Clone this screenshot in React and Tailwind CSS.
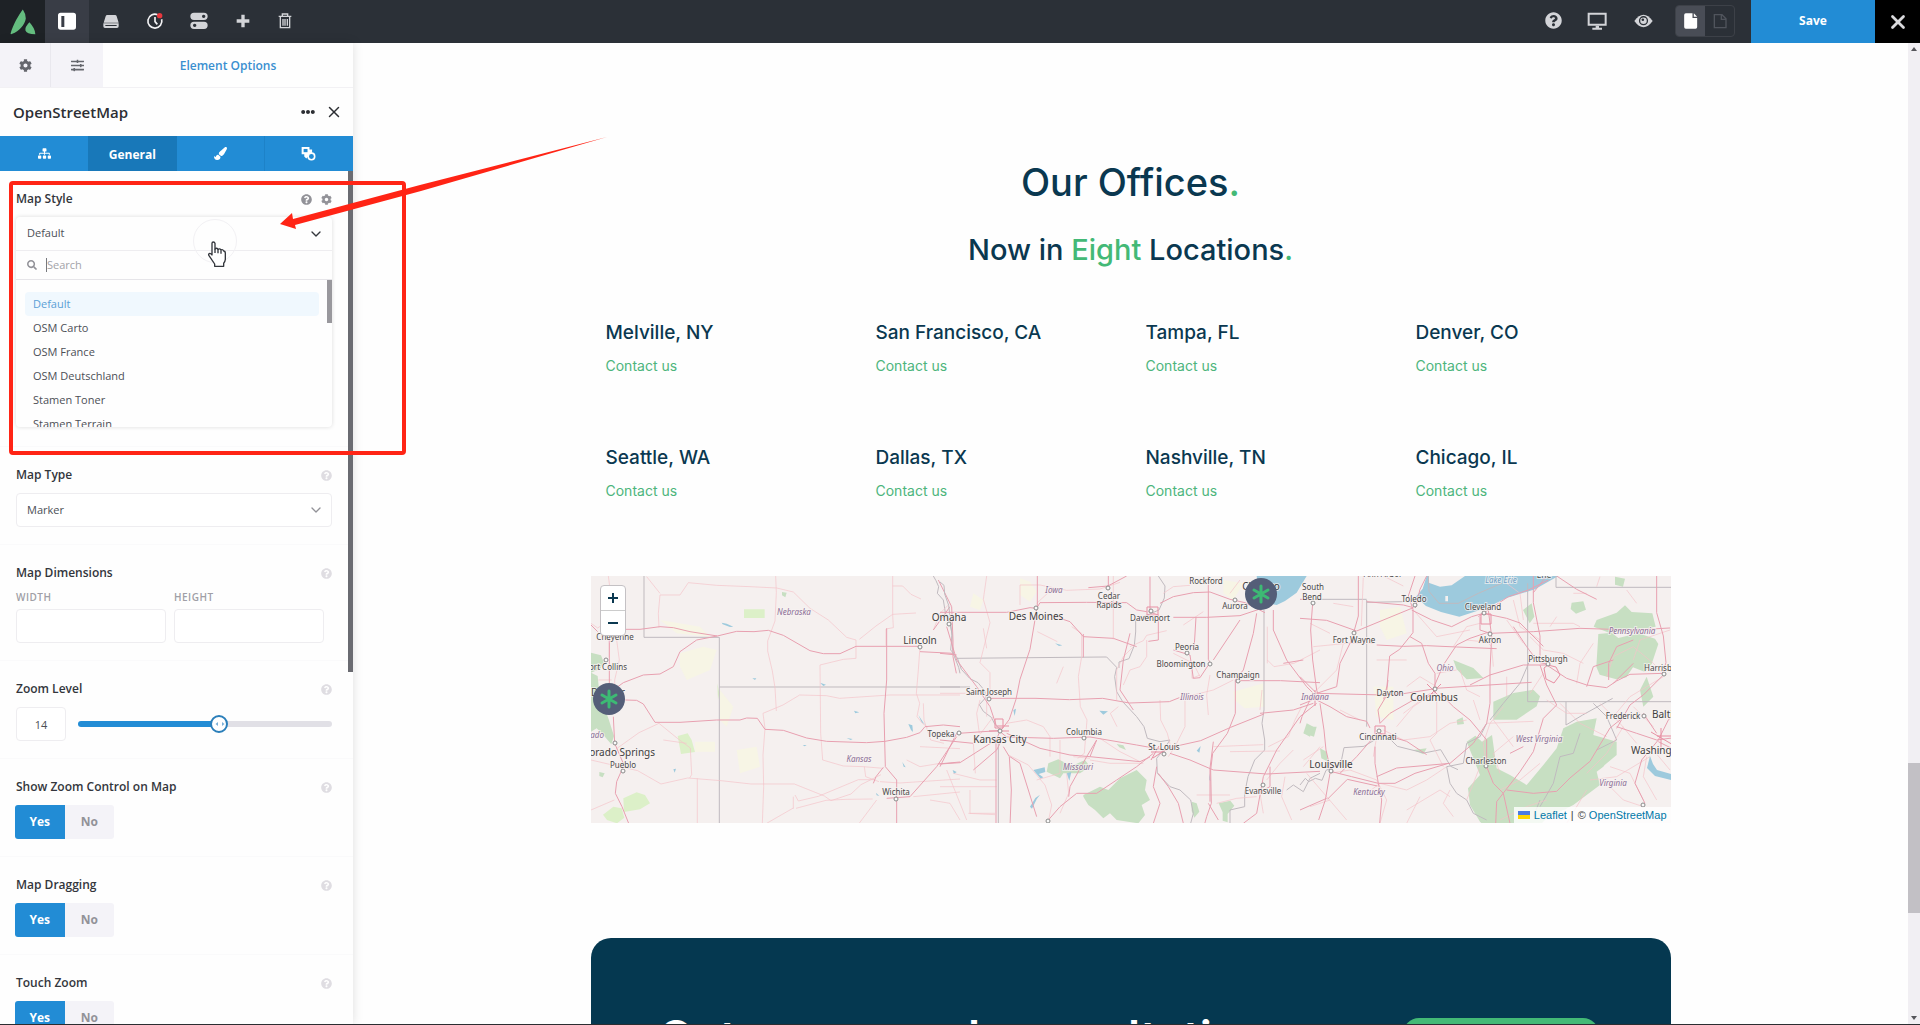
import { FaQuestionCircle, FaCog, FaSlidersH, FaPaintBrush, FaSitemap, FaSearch, FaEllipsisH } from "react-icons/fa";
import { X, ChevronDown } from "lucide-react";

const YES_NO = ["Show Zoom Control on Map", "Map Dragging", "Touch Zoom"];
const STYLES = ["Default", "OSM Carto", "OSM France", "OSM Deutschland", "Stamen Toner", "Stamen Terrain"];
const OFFICES = ["Melville, NY", "San Francisco, CA", "Tampa, FL", "Denver, CO", "Seattle, WA", "Dallas, TX", "Nashville, TN", "Chicago, IL"];

/* ---------- header ---------- */

function Icon({ box, className, children }) {
  return (
    <svg viewBox={box} className={className} fill="currentColor" aria-hidden="true">
      {children}
    </svg>
  );
}

function BarButton({ label, active, width = "w-11", children }) {
  return (
    <button
      type="button"
      aria-label={label}
      className={"flex items-center justify-center pb-0.5 text-[#d3d4d8] " + width + (active ? " bg-[#393d46]" : "")}
    >
      {children}
    </button>
  );
}

function TopBar() {
  return (
    <header className="flex h-[43px] shrink-0 bg-[#2b3037]">
      <a href="#home" aria-label="Avada" className="flex w-[45px] items-center justify-center bg-[#1e2226]">
        <Icon box="28 24 79 78" className="size-[26px] text-[#64bd7f]">
          <path d="M67 25C56 38 36 74 30 97Q29 102 35 99C56 90 73 72 76 52Q76 38 67 25Z" />
          <path d="M87 64Q73 78 75 89Q78 100 105 100Q104 82 87 64Z" />
        </Icon>
      </a>
      <BarButton label="Toggle sidebar" active>
        <Icon box="174 35 54 54" className="size-[18px] text-white">
          <path fillRule="evenodd" d="M182 37h38q8 0 8 8v35q0 8-8 8h-38q-8 0-8-8V45q0-8 8-8zM184 47v33h9V47z" />
        </Icon>
      </BarButton>
      <BarButton label="Library">
        <Icon box="310 40 48 48" className="size-4">
          <path d="M323 46h23q4 0 5 4l6 19H312l6-19q1-4 5-4z" />
          <path fillRule="evenodd" d="M311 71h46v9q0 5-5 5h-36q-5 0-5-5zM317 76v3h34v-3z" />
        </Icon>
      </BarButton>
      <BarButton label="History">
        <Icon box="440 35 54 54" className="size-[18px]">
          <path d="M475 43A21 21 0 1 0 487 57" fill="none" stroke="#f2f2f4" strokeWidth="5" />
          <path d="M467 50v14l7 8" fill="none" stroke="#f2f2f4" strokeWidth="5" />
          <circle cx="481" cy="46" r="8" fill="#e8383f" />
        </Icon>
      </BarButton>
      <BarButton label="Preferences">
        <Icon box="575 36 54 54" className="size-[18px]">
          <path fillRule="evenodd" d="M587 38h30a10.500 10.500 0 0 1 0 22h-30a10.500 10.500 0 0 1 0-22zM616 44a5 5 0 1 0 .1 0z" />
          <path fillRule="evenodd" d="M587 65h30a11 11 0 0 1 0 22h-30a11 11 0 0 1 0-22zM589 71a5 5 0 1 0 .1 0z" />
        </Icon>
      </BarButton>
      <BarButton label="Add">
        <Icon box="709 42 42 42" className="size-3.5">
          <path d="M725 44h10v14h14v10h-14v14h-10V68h-14V58h14z" />
        </Icon>
      </BarButton>
      <BarButton label="Delete" width="w-10">
        <Icon box="832 38 42 48" className="h-4 w-3.5">
          <path d="M834 48h38M845 47v-6h16v6M839 50v32h28V50M847 56v20M853 56v20M860 56v20" fill="none" stroke="currentColor" strokeWidth="4" />
        </Icon>
      </BarButton>

      <div className="ml-auto flex">
        <BarButton label="Help"><FaQuestionCircle className="size-[17px]" /></BarButton>
        <BarButton label="Responsive view">
          <Icon box="262 36 60 54" className="h-[18px] w-5">
            <path fillRule="evenodd" d="M264 38h57v39h-57zM270 44v27h45V44z" />
            <path d="M288 77h10v6h9v6h-29v-6h10z" />
          </Icon>
        </BarButton>
        <BarButton label="Preview" width="w-12">
          <Icon box="400 36 58 54" className="h-[18px] w-[19px]">
            <path d="M401 63Q429 25 457 63Q429 101 401 63Z" />
            <circle cx="429" cy="62" r="12" fill="none" stroke="#2b3037" strokeWidth="4" />
            <circle cx="427" cy="59" r="4" fill="#2b3037" />
          </Icon>
        </BarButton>
        <div className="mt-[5px] ml-2 flex h-8 w-[60px] overflow-hidden rounded-sm border border-[#3d4148]">
          <button type="button" aria-label="Page" className="flex flex-1 items-center justify-center bg-[#494d56]">
            <Icon box="546 36 44 48" className="h-4 w-[15px] text-white">
              <path d="M554 37h20v14h14v27q0 5-5 5h-29q-5 0-5-5V42q0-5 5-5z" />
              <path d="M578 37l10 10h-10z" />
            </Icon>
          </button>
          <button type="button" aria-label="Off canvas" className="flex flex-1 items-center justify-center">
            <Icon box="636 37 42 46" className="h-4 w-3.5">
              <path d="M640 41h23l12 12v27h-35zM661 41v14h13" fill="none" stroke="#50545c" strokeWidth="4" />
            </Icon>
          </button>
        </div>
        <button type="button" className="ml-4 w-[124px] bg-[#228cd5] pb-0.5 text-xs font-bold text-white">Save</button>
        <button type="button" aria-label="Close builder" className="flex w-[45px] items-center justify-center bg-black text-[#d9d9dc]">
          <X className="size-[22px]" strokeWidth={3} />
        </button>
      </div>
    </header>
  );
}

/* ---------- options panel ---------- */

function Help({ dark }) {
  return (
    <button type="button" aria-label="Help" className={dark ? "text-[#929298]" : "text-[#dfdde2]"}>
      <FaQuestionCircle className="size-[11px]" />
    </button>
  );
}

function Section({ title, id, dark, extra, children }) {
  return (
    <section className="border-b border-[#fafafb] pt-4 pr-[21px] pb-[17px] pl-4">
      <div className="flex h-6 items-center gap-[9px]">
        <label htmlFor={id} className="mr-auto text-xs font-semibold text-[#33363c]">{title}</label>
        <Help dark={dark} />
        {extra}
      </div>
      {children}
    </section>
  );
}

const field = "h-[34px] rounded border border-[#eeedf0] bg-white text-[11px] text-[#4c4f56]";

function MapStyleDropdown() {
  return (
    <div className="relative mt-1.5 mb-0.5 overflow-hidden rounded shadow-[0_0_4px_rgba(0,0,0,0.14)]">
      <button id="map-style" type="button" aria-expanded="true" className="flex h-[34px] w-full items-center justify-between border-b border-[#eeedf0] pr-2 pl-[11px] text-[11px] text-[#4c4f56]">
        Default
        <ChevronDown className="size-4 text-[#33363c]" strokeWidth={2} />
      </button>
      <div className="flex h-[29px] items-center gap-[9px] border-b border-[#e6e5e9] pl-[11px]">
        <FaSearch className="size-2.5 text-[#929298]" />
        <div className="flex h-3.5 flex-1 items-center border-l border-[#77797e]">
          <input aria-label="Search" placeholder="Search" className="w-full text-[11px] outline-none placeholder:text-[#a3a3a9]" />
        </div>
      </div>
      <div className="flex h-[147px]">
        <ul role="listbox" aria-label="Map styles" className="flex-1 overflow-hidden pt-3 pr-2 pl-[9px]">
          {STYLES.map((s, i) => (
            <li key={s} role="option" aria-selected={i === 0}
              className={"flex h-6 items-center rounded-sm pl-2 text-[11px] " + (i === 0 ? "bg-[#f0f8fe] text-[#5b9fd6]" : "text-[#4c4f56]")}>
              {s}
            </li>
          ))}
        </ul>
        <div className="h-[43px] w-[5px] bg-[#99989d]" />
      </div>
    </div>
  );
}

function YesNo({ title }) {
  return (
    <div role="group" aria-label={title} className="mt-1.5 -ml-px flex h-[34px] w-[99px] overflow-hidden rounded-[3px] text-xs font-bold">
      <button type="button" aria-pressed="true" className="flex-1 bg-[#228cd5] text-white">Yes</button>
      <button type="button" aria-pressed="false" className="flex-1 bg-[#f4f3f8] text-[#929298]">No</button>
    </div>
  );
}

function Panel() {
  return (
    <aside className="z-10 flex w-[353px] shrink-0 flex-col bg-[#fefefe] shadow-[0_0_10px_rgba(0,0,0,0.13)]">
      <div className="flex h-[45px] shrink-0 border-b border-[#f2f1f4] text-[#65676d]">
        <button type="button" aria-label="Settings" className="flex w-[51px] items-center justify-center border-r border-[#e9e8ee] bg-[#f4f3f8]"><FaCog className="size-[13px]" /></button>
        <button type="button" aria-label="Options" className="flex w-[52px] items-center justify-center bg-[#f4f3f8]"><FaSlidersH className="size-[13px]" /></button>
        <button type="button" className="flex-1 pt-0.5 text-xs font-semibold text-[#3a8fd0]">Element Options</button>
      </div>
      <div className="flex h-12 shrink-0 items-center gap-2.5 pr-2.5 pl-[13px] text-[#2c2e33]">
        <h2 className="mr-auto text-[15px] font-semibold">OpenStreetMap</h2>
        <button type="button" aria-label="More"><FaEllipsisH className="size-3.5" /></button>
        <button type="button" aria-label="Close"><X className="size-[18px]" strokeWidth={2} /></button>
      </div>
      <nav className="grid h-[35px] shrink-0 grid-cols-4 bg-[#228cd5] text-white">
        <button type="button" aria-label="Children" className="flex items-center justify-center"><FaSitemap className="size-[13px]" /></button>
        <button type="button" className="bg-[#1878b9] pt-0.5 text-xs font-bold">General</button>
        <button type="button" aria-label="Design" className="flex items-center justify-center border-r border-[#1d82c8]"><FaPaintBrush className="size-[13px]" /></button>
        <button type="button" aria-label="Extras" className="flex items-center justify-center">
          <Icon box="904 438 46 46" className="size-[15px]">
            <path d="M906 441h24v8h8v9l-18 18-6-6v-7h-8z" />
            <path d="M912 447h12v10h-12z" fill="#228cd5" />
            <circle cx="936" cy="470" r="10" fill="#228cd5" stroke="currentColor" strokeWidth="5" />
          </Icon>
        </button>
      </nav>
      <div className="flex min-h-0 flex-1 overflow-hidden">
        <div className="-mr-[5px] min-w-0 flex-1">
          <Section title="Map Style" id="map-style" dark extra={<button type="button" aria-label="Dynamic" className="text-[#929298]"><FaCog className="size-[11px]" /></button>}>
            <MapStyleDropdown />
          </Section>
          <Section title="Map Type" id="map-type">
            <div className="relative mt-1.5">
              <select id="map-type" className={field + " w-full appearance-none pl-2.5"}><option>Marker</option></select>
              <ChevronDown className="pointer-events-none absolute top-[9px] right-2 size-4 text-[#929298]" strokeWidth={2} />
            </div>
          </Section>
          <Section title="Map Dimensions" id="map-width">
            <div className="flex gap-2 pr-2">
              {["Width", "Height"].map((n) => (
                <div key={n} className="flex flex-1 flex-col">
                  <label htmlFor={"map-" + n.toLowerCase()} className="h-6 text-[10px] leading-6 font-semibold tracking-wider text-[#a09fa6] uppercase">{n}</label>
                  <input id={"map-" + n.toLowerCase()} className={field} />
                </div>
              ))}
            </div>
          </Section>
          <Section title="Zoom Level" id="zoom-level">
            <div className="mt-1.5 flex items-center gap-3">
              <input id="zoom-level" defaultValue="14" className={field + " w-[50px] text-center"} />
              <div className="relative flex flex-1 items-center">
                <input type="range" aria-label="Zoom level slider" min="0" max="25" defaultValue="14"
                  className="h-1.5 w-full appearance-none rounded-sm bg-[linear-gradient(to_right,#228cd5_55%,#e1e0e6_55%)] [&::-webkit-slider-thumb]:size-[18px] [&::-webkit-slider-thumb]:appearance-none [&::-webkit-slider-thumb]:rounded-full [&::-webkit-slider-thumb]:border-2 [&::-webkit-slider-thumb]:border-[#2b7fba] [&::-webkit-slider-thumb]:bg-white" />
                <Icon box="0 0 10 6" className="pointer-events-none absolute left-[56%] h-1.5 w-2.5 -translate-x-1/2 text-[#7bb0d8]">
                  <path d="M3 1v4L0.500 3zM7 1v4L9.500 3z" />
                </Icon>
              </div>
            </div>
          </Section>
          {YES_NO.map((t) => (
            <Section key={t} title={t}><YesNo title={t} /></Section>
          ))}
        </div>
        <div className="relative h-[501px] w-[5px] shrink-0 bg-[#6a6b71]" />
      </div>
    </aside>
  );
}

/* ---------- map ---------- */

/* [text, x, centre y, kind, anchor]; kinds: s town, l city, i state, w water */
const LABELS = [
  ["Nebraska", 203, 36, "i"], ["Cheyenne", 24, 61, "s"], ["Fort Collins", 36, 91, "s", "end"], ["Denver", 17, 116, "l"],
  ["Colorado", 13, 159, "i", "end"], ["Colorado Springs", 64, 176, "l", "end"], ["Pueblo", 32, 189, "s"], ["Lincoln", 329, 64, "l"],
  ["Omaha", 358, 41, "l"], ["Topeka", 350, 158, "s"], ["Kansas", 268, 183, "i"], ["Wichita", 305, 216, "s"],
  ["Iowa", 463, 14, "i"], ["Cedar", 518, 20, "s"], ["Rapids", 518, 29, "s"], ["Des Moines", 445, 40, "l"], ["Davenport", 559, 42, "s"],
  ["Rockford", 615, 5, "s"], ["Chicago", 670, 10, "l"], ["Aurora", 644, 30, "s"], ["Peoria", 596, 71, "s"], ["Bloomington", 590, 88, "s"],
  ["Champaign", 647, 99, "s"], ["Illinois", 601, 121, "i"], ["Saint Joseph", 398, 116, "s"], ["Kansas City", 409, 163, "l"],
  ["Columbia", 493, 156, "s"], ["Missouri", 487, 191, "i"], ["St. Louis", 573, 171, "s"], ["Evansville", 672, 215, "s"],
  ["South", 722, 11, "s"], ["Bend", 721, 21, "s"], ["Toledo", 823, 23, "s"], ["Lake Erie", 910, 4, "w"], ["Erie", 953, -1, "s"],
  ["Ann Arbor", 792, -2, "s"], ["Cleveland", 892, 31, "s"], ["Akron", 899, 64, "s"], ["Fort Wayne", 763, 64, "s"], ["Ohio", 854, 92, "i"],
  ["Dayton", 799, 117, "s"], ["Columbus", 843, 121, "l"], ["Indiana", 724, 121, "i"], ["Cincinnati", 787, 161, "s"],
  ["Louisville", 740, 188, "l"], ["Kentucky", 778, 216, "i"], ["Charleston", 895, 185, "s"], ["West Virginia", 948, 163, "i"],
  ["Pittsburgh", 957, 83, "s"], ["Pennsylvania", 1041, 55, "i"], ["Harrisburg", 1053, 92, "s", "start"], ["Frederick", 1032, 140, "s"],
  ["Baltimore", 1061, 138, "l", "start"], ["Washington", 1040, 174, "l", "start"], ["Virginia", 1022, 207, "i"],
];

const KINDS = {
  s: "fill-[#4a4a4a] text-[8px]",
  l: "fill-[#404040] text-[10px]",
  i: "fill-[#8b6f96] text-[8px] italic",
  w: "fill-[#6f9fc4] text-[8px] italic",
};

/* West, middle and east sheets; each is drawn at three units to the pixel. */
const SHEETS = [
  {
    at: "translate(-11 -16) scale(0.33333)",
    green: "M33 278l30 8 8 20-10 20-28 12zM33 338l20 10 5 50 28 80 16 50-8 25-24-28-20-20-17 10zM606 96l14 2-4 14-10-6zM58 636l16 4-6 12-10-4z",
    lime: "M492 148h62v26h-62zM293 528l30-8 12 20 10 36-42 6zM412 370l6 30-4 20zM130 715l40-18 25 8 15 25-30 18-48 8zM100 740l25 5 8 28-22 17-30-10-12-16z",
    yellow: "M300 280l70-20 40 10-20 60-70 30-20-40zM240 180l120 20 30 30-100-10zM420 390l40 50-20 60-20-20zM470 570l60-10 10 60-60 20zM345 545h60v30h-60z",
    water: "M425 188l15 3 20 9-10 1-22-8zM720 368l18 6-8 4zM822 452l16 5-12 3zM800 534l18 3-6 3zM985 492l12 4 2 20-6-6zM1015 465l16 24 6 6-12-8zM967 606l10 16-6-2zM517 355h12l-4 5zM668 555h12l-6 4zM230 638l4 8zM280 628l8-2-4 12zM1118 630l12 6-8 6zM888 698l10 10-8-2z",
    border: "M192 48V232H418V790M418 381H1140M1060 48l8 14 8 18-4 20 18 20 6 38 14 34 6 30 0 30 4 30 16 40 4 18",
    thin: "M325 68L410 76 510 80 590 84 640 96 690 145 745 180 800 232 828 240V295L790 298 720 315 722 520 728 600 790 618 850 620 910 625M325 68L300 105H240L235 160 237 203M587 48l2 50-4 85-22 60 0 30 14 60 8 50 4 70M555 505l-6-45 60-25 50-30 80 2 40 8 150-10H1140M938 48v115l70-4M938 163l-50 35-50 40M938 163l2 40-22 4v50M938 78h30l25 25 30 14M1020 260l-5 70-6 70 10 30-8 40 16 20 16 12M555 505l-6 80 2 95-4 110M33 600l60 14 80 18 70 40 80-18 100 8 90 10 130 0 90 36 20 14 60-20 30-28 60-30M645 705l10 18 60-14 120-50 50 0M648 745l90-24 60-3 80-1M830 800l60-80M640 710l0 36M237 490l-60 28-70 50M237 490l54 44 40 30 4 80-6 10M352 655v135M33 190l20 14 30-20 4-30M88 232v60M110 240l8 60-14 60 0 50M55 360h40M33 750l70-30M250 540l70 10M900 665l60 4 180-12M560 790l80-46M980 600l40 20 60-10M853 620l4 30 40 15 M1020 560l120 6M1000 710l140-14M85 48l8 60M200 50l40 50M1060 210l20-50 30-30M1030 430l2 50 20 60 40 10M1050 720l60 10 30 50",
    road: "M138 208H180L240 200 280 203 330 215 412 228 470 214 522 215 565 211 610 226 690 272 730 281 780 281 828 259H1020M412 228L350 240 300 275 280 320 240 342 190 345 130 368 100 390M136 420L170 421 190 432 225 487 300 487 410 480 480 480 500 474 532 475 555 508 610 511 680 534 740 544 860 548 915 544 980 532 1020 518 1035 500 1090 495 1140 500M920 205v155l-8 100 4 160 34 40v130M910 622L888 650 880 670M920 715l70-5 80-90 60-90M88 232V370M100 470l4 80 28 65-22 50-4 35 20 40 20 50M1060 210l50-70M1075 60l40 80 4 100 0 50 10 50M1020 275l100 5M1075 612l65-6M33 195l20 20",
  },
  {
    at: "translate(349 -16) scale(0.33333)",
    green: "M430 705l50-25 25 10 35-35 50-25 30 30-5 30 15 30-25 15 10 30-20 25-65-10-20-20-20 15-25-25-20-15-15-25zM325 610l30-12 40 20 40-18 15 20-30 20-50 0-10 15-40-20zM755 725l15 5 8 25-15 18-8-20zM836 730l35-8 12 15-20 25 0 25-15-5 0-25zM1100 500l30 0-8 30-30-10zM530 552l20 4 8 14-20-8z",
    lime: "",
    yellow: "M240 55l30 10 20 30-20 30-30-20zM880 395l90-25 4 70-60 5-30-25zM100 100l30 20-10 30-30-10zM850 60l60 10-30 50-30-20z",
    water: "M950 48h150l-30 50-35 25-25 12-50-10-5-40zM770 572l12-14-4 20zM270 740l16-26 14-10-10 14-14 28zM280 630l34-8 2 14-20 6 14 10-8 4zM808 640l4 24-4-4zM478 452l26 2-14 10zM345 250l22 6-10 2zM220 450l8-4-4 22zM380 640l14-4-6 26z",
    border: "M0 66l12 10 2 26 12 34 6 50 4 40-4 44 20 24 12 34 26 28 24 12 20 24 4 20-20 22 12 20 24 18 10 20 16 16M52 295L500 291 530 322 524 350 530 395 548 425 590 470 612 500 622 535 660 545 690 540 670 570 650 595 652 640 690 680 720 690 752 720 760 760 752 790M655 48l20 30-2 36-16 36-70 30 0 36-4 40-16 40-30 10 0 18M175 540V790M972 150V450l-6 40 8 50 0 30-30 30-20 50-10 50 0 40-44 10 0 60M1140 640l-30 15-20 40-30-20-20 15M0 381H90",
    thin: "M140 48l-10 70 20 70-20 80-10 40 30 30 0 80M140 265l-10-60M292 215l60 30M395 200l30 20 0 70-10 60 6 90 20 40-8 100-20 15M0 400h100l60 5M240 75h60l80 16 100-4 60-20M240 75v60M290 130l50-46M170 680H0M90 690l0 70h75M85 760l80 4M205 585l60 30 50 60 20 60-10 50M520 48l0 190M580 260l-30 30-20 40 0 90M570 260l40-18 10-16 60-14M535 440l-24 20 20 40M480 535l60 40 60 30M160 470l-30 40-30 40 6 90M200 490l60-10 50 20 20 30 0 60M400 590l50 5M360 540l0 100-70 20M450 600l60 10 100 0M700 280l60 30 20 40M780 345l-24 10 0-50M740 410l80-20 60-30M735 420l0 80-30 60-20 30M660 420l2 60 20 40 10 40M550 375l20-45 30-10 20-30 0-50M810 345l-10 60 5 60M820 560l150-6M870 575l150-2M982 300l20 20 60-10 78-40M982 200l0 110M1060 570l-40 40-40 50M985 560l60-30 20-50 20-40M830 730l60-15 60-5M770 705h100M960 700l10 60M1035 650l-10 60 30 70M900 60l-30 40M960 450l6-60M790 155l-60 40M20 630l60 150M40 640l80 20 50 0M380 640l6 60-26 60M140 420l0 50M120 420l-10 40 8 60M350 370l20-50M670 100l30-20 50-4",
    road: "M0 157H200L270 143 290 145 300 128 440 127 560 128 590 150 620 155M292 48v90l-22 130-30 90-12 60-20 60-30 40M330 165l60 20 40 45 90 5 70 25M430 222v70M505 48v30l-60 5M560 48l-60 32M630 50l0 100M625 155l30 10 0 75-30 4M660 130l40-20 60-12 50-2 60 22 45 10 60 30M700 172l100 0 100-5 60-20M805 48v250l5 10-30 45-20 2-10-70-50-15M768 172l-6 100M950 160l-10 60-30 110-24 30 0 100-24 60-44 60-6 50 2 100-14 40-14 50M820 300l40-60 40-60M892 362h130l118 6M972 462l-100 40-90 40-90 20M1000 150l0 60 40 90 60 80 30 30M1120 430l-60 20-100 10M1130 430l-50 40-70 100-40 80-20 110-40 30M690 580l60 20 70 30 160 12 160-8M820 545l-10 80 0 100M20 200l30 100 60 80 40 60 20 60M0 280l50 5M148 415h140l100 4 100-4 80 14 120-4 30-12M100 630l70-60 20-40M0 612l60-4 110-70 10-26M55 520l120-8M0 620l50-100M180 515l20 16 140 4 110-4 140 24 90 16M200 520l100 45 90 20 60 5 150 15 30-14M470 540l-30 50-50 90-4 30M0 540l100 10M168 530V790M190 560l18 30 6 100-4 110M640 580l-50 40-60 40-60 40-60 0-50 40-40 46M655 640l30 40 30 50 15 60M650 620l-10 60 20 50-20 60M450 590l20-50M210 590l30 20 50 160M950 700l40-20 0-60M805 730l30 50M1090 300l-60 10M570 220l-20 80-10 90 40 60",
  },
  {
    at: "translate(709 -16) scale(0.33333)",
    green: "M890 180l60-22 25-22 20 20 62 4 10 40-50 8-90 10-46-18zM895 222l40-4 20 16 60-14 50 16 10 16-20 60-20 24-36-14-20 30-30 6-50-14-10-24zM815 128l35-4 8 25-30 12-16-14zM580 425l60-26 60-10 20 20-10 30-60 40-70 0zM500 545l26-18 20 18 30-20 14 100 40 20 50 30 50-60 40-50 20-60 40-20 60-10-10 50 70 20 0 40-60 50 10 40-80 60-80 40-20 20-110 50-40-30-30-30-30-50-6-50 36-40zM460 300l60 24 30 30-50 4-30-30zM880 600l40-40 20 20-30 40-40 30zM800 700l40-20-6 40-40 30zM20 490l20 10-10 30-20-10zM60 565l20 10 4 30-20-10zM1040 350l20 60-30 30-10-50zM945 50l30 6-6 24-24-6zM470 480l18-8 4 20-20 2zM340 570l40-5-10 18zM695 130l8 40-14 20-20-40z",
    lime: "",
    yellow: "M240 150l60-10 20 80-60 20-20-40zM220 380l60 0 0 100-50-10z",
    water: "M0 48h18l-18 24zM380 48h395l-70 40-85 26-62 30-80 26-55-14-45-18-30-28 20-24z",
    extra: "M385 48h110l-40 28-35 4-34-12zM436 108h8v16h-8z",
    border: "M385 48l2 46 30 36h58l60-30 70-30M200 120V500M200 127l110-2 60-5M40 118h160M683 70V425H1116M768 48v34h348M798 425v70l50-30 90-50M0 675l16-20 10 10 20-10 20 6 12-30 44-18 10-50 60-4 50-30 20 0 30 30 80 20 50-10 30 50 22 10M560 490l-20 40-40 20-10 60-50 10 10 50 20 30 30 20 20 40 40 20M570 480l40-50 50-60 30-70M720 740l40-70 20-80 40-10 20-60M880 430l40 40 30 70-60 30M700 770l20-50",
    thin: "M190 48l-6 150M250 48l60 30M40 260l100-10 80 0M230 300h90M410 340l60-10M410 380l-50-30-40 30M400 400l-60 40-50 60M410 420l0 100-20 20 40 80M250 510l60 30 80-10 60-40 50-10M560 490l140-6M10 600l60-40M440 620l-60 40-60 30-80-20-40 30M230 660l-80-30-60 10M230 660l30 60-20 70M80 710l60 70M20 640l60 70M320 750l100-60 30 20M450 690l-20 40 30 40M600 690l60-30 60-50M610 440l-40 50-20 60 10 80M640 120l20 80 60 40M620 70l40 30 10 80M700 190l120 0 20 10M770 170l-20 30M690 230l40 40 60 10 60 30M830 370l10-60 40-60M920 350l20-60 60-30M1000 260l60 50 30 30M1000 300l20-60 90-30M980 90l30 40M890 80l10-30M860 100l-40 0M940 470l50-60 100-60M1000 440l60 60M900 430l60 60 50 60M860 640l60-60 50-80M870 660l80-10 100-60M930 620l60 20 40 80M800 790l60-100M1040 590l-10 60 40 70M1060 570l50 60M1030 740l-60-20-60-60M740 420l60 40 60 0M780 430l60 60 80 40M600 640l-20-60 60-50M640 560l-60-80M480 330l20 60 40 20M310 460l80-60M180 480l-60-30M130 250l-20 80-60 60M540 190l-40 10-40 60M545 230l30 30 5 60M620 180l50 70M600 780l80-40 60-20M500 720l40-100M100 130l60 10M30 190l60 30M500 240l90 10M340 150l70 80 100-20M220 590l10-60M60 560l-50 60M360 710l-40 80M30 740l60-20M520 420l20 60M620 350l0 60M690 400l40-60",
    road: "M38 130l-6 80 6 90 12 90 6 20M38 118L0 118M175 48l0 120-14 50M0 175l80 6 90 32 170-70M200 125l110 10 30 8M345 48l-20 60 14 40 0 70-40 50-30 20-8 90-10 40M335 150l60 30 60 20 60-30 35-10 70 15 40 14 70 70M380 48l-20 40-14 56M540 170v40l30 10 130-5 140-10 160 5 110-6M565 150l10 80-5 100 0 100-10 60-40 60-70 60-160 14-60 26M330 230l35 20 20 60 20 30 0 60M230 255l80 4 70-2 90 4 120 5M570 215l-60 20-40 20-40 60-30 70M405 385l130-8 160-10M0 350l50 50 200 5 60-4 90-14M50 400l60-20 10-70 30-60 14-30M50 420l40 20 50 30 60 14 10 20M60 430l12 80 6 60 14 60M30 420l-24 50-6 20M50 415l-50 20M400 400l-60 20-70 40-30 30M240 490l-6-40 24-40 6-50M420 400l40 40 50 40 50 60 0 80M240 520l80 24 60 40M120 640l50-50 70-80M225 560v50l10 60 10 50-6 70M95 635l60 15 80 20 50 0 60-30 100-30M90 640l-14 80-20 60M80 715l-80 35M82 718l60-60 90 20M700 48l0 80 20 100 0 80 20 4M740 315l-70 0-100 30-60 30M740 315l60 40 60 20 60 8 30-20 40-20 100-3M720 315l20 60 30 60-40 40-30 100-40 60-70 90-4 90M745 60l-60 30-60 20-90 60M560 620l20 50 30 30 20 90M620 690l80 10 70-6 40-40 60-50 60-100 50-40M630 580l40-20M1070 48l0 110 20 70 8 80-10 30M1000 240l-50 20-24 50 0 50M940 370l60-60M860 380l20-60 60-20M1090 345l-60 60-40 30-40 70M1030 460l40 60M950 500l60 20 60 20 46-6M1075 540l-50 60-20 70 30 60M1075 540l30-60 10-10M1075 545l40 20M740 48l-40 50M770 48l60 40 60 30M640 200l40 60 30 40",
  },
];

const TOWNS = [[329, 71], [358, 48], [32, 195], [24, 167], [15, 84], [305, 223], [368, 157], [409, 155], [445, 32], [517, 12], [560, 35], [619, 88], [596, 77], [647, 105], [672, 209], [573, 178], [493, 162], [398, 123], [722, 27], [824, 29], [893, 37], [899, 58], [763, 57], [844, 113], [788, 155], [740, 195], [895, 190], [957, 88], [1073, 98], [1052, 229], [1053, 140], [644, 24], [457, 245]];

function MapDrawing() {
  return (
    <svg width="1080" height="247" viewBox="0 0 1080 247" className="mx-auto block shrink-0 font-['Noto_Sans',sans-serif]" role="img" aria-label="Map of the central United States">
      {SHEETS.map((s) => (
        <g key={s.at} transform={s.at} fill="none" strokeLinejoin="round">
          <path d={s.yellow} fill="#f7f5e5" />
          <path d={s.lime} fill="#dcf0c8" />
          <path d={s.green} fill="#c7dfc2" />
          <path d={s.water} fill="#9dcadd" />
          <path d={s.extra} fill="#f5f0ef" />
          <path d={s.border} stroke="#c0babf" strokeWidth="3" />
          <path d={s.thin} stroke="#f5c3c8" strokeWidth="2" />
          <path d={s.road} stroke="#e8a0b0" strokeWidth="3" />
        </g>
      ))}
      <g fill="none" stroke="#e88fa3">
        <path d="M404 143h8v9h-8zM406 150h12M398 155h20M556 31h11v8h-11zM568 170l-8 14M560 176h14M562 182l12-8M784 150h10v8h-10zM850 108l-14 14M836 108l14 14M953 92l4-3 8 2 4 8-6 8-8-4zM1066 160h18M1070 152v20M1060 156l24 14M724 114v16M716 122h18M890 38h10v10h-10z" />
      </g>
      <path d="M1059 180l-3 12 8 8 16 4v-6l-14-4-4-6z" fill="#9dcadd" />
      <g fill="#fafafa" stroke="#8a8a8a">
        {TOWNS.map(([x, y]) => <circle key={x + "-" + y} cx={x} cy={y} r="2" />)}
      </g>
      <g stroke="#f8f3f2" strokeWidth="2" strokeOpacity="0.7" className="[paint-order:stroke]">
        {LABELS.map(([t, x, y, k, a]) => (
          <text key={t} x={x} y={k === "l" ? y + 4 : y + 3} textAnchor={a || "middle"} className={KINDS[k]}>{t}</text>
        ))}
      </g>
    </svg>
  );
}

function Marker({ className }) {
  return (
    <button type="button" aria-label="Office marker" className={"absolute size-8 " + className}>
      <svg viewBox="0 0 32 32" fill="none" aria-hidden="true">
        <circle cx="16" cy="16" r="16" fill="#545e78" />
        <path d="M16 8v16M9 12l14 8M23 12L9 20" stroke="#3dba74" strokeWidth="3" strokeLinecap="round" />
      </svg>
    </button>
  );
}

function OfficeMap() {
  return (
    <div className="relative mt-[74px] flex h-[247px] overflow-hidden bg-[#f5f0ef]">
      <MapDrawing />
      <div className="absolute top-[9px] left-[9px] flex w-[26px] flex-col rounded-sm border border-[#c4c1c4] bg-white">
        <button type="button" aria-label="Zoom in" className="flex h-[25px] items-center justify-center border-b border-[#cccccc]">
          <Icon box="0 0 10 10" className="size-2.5"><path d="M4 0h2v4h4v2H6v4H4V6H0V4h4z" /></Icon>
        </button>
        <button type="button" aria-label="Zoom out" className="flex h-6 items-center justify-center">
          <Icon box="0 0 10 10" className="size-2.5"><path d="M0 4h10v2H0z" /></Icon>
        </button>
      </div>
      <Marker className="top-[107px] left-0.5" />
      <Marker className="top-0.5 left-[654px]" />
      <div className="absolute right-0 bottom-0 flex h-4 items-center gap-1 bg-white/80 px-1 font-['Liberation_Sans',sans-serif] text-[11px] text-[#444444]">
        <Icon box="0 0 12 8" className="h-2 w-3">
          <path fill="#4c7be1" d="M0 0h12v4H0z" />
          <path fill="#ffd500" d="M0 4h12v4H0z" />
        </Icon>
        <a href="#leaflet" className="text-[#0078a8]">Leaflet</a>
        <span>|</span>
        <span>© <a href="#osm" className="text-[#0078a8]">OpenStreetMap</a></span>
      </div>
    </div>
  );
}

/* ---------- page ---------- */

function Page() {
  return (
    <main className="min-w-0 flex-1 overflow-hidden bg-[#fefefe] font-['Inter',sans-serif] text-[#0a3850]">
      <div className="mx-auto max-w-[1080px] pt-[115px]">
        <h1 className="text-center text-[38px] leading-[48px] font-medium">Our Offices<span className="text-[#43b976]">.</span></h1>
        <h2 className="mt-[26px] text-center text-[29px] leading-9 font-medium">Now in <span className="text-[#43b976]">Eight</span> Locations<span className="text-[#43b976]">.</span></h2>
        <div className="mt-[51px] grid grid-cols-4 gap-y-[67px]">
          {OFFICES.map((o) => (
            <div key={o} className="pl-[15px]">
              <h3 className="text-[19px] leading-7 font-medium">{o}</h3>
              <a href="#contact" className="mt-2 block text-sm leading-[22px] text-[#4db57c]">Contact us</a>
            </div>
          ))}
        </div>
        <OfficeMap />
        <section className="mt-[115px] flex items-start justify-between rounded-t-[20px] bg-[#053850] pt-[70px] pr-[72px] pb-20 pl-[68px]">
          <h2 className="text-[46px] leading-[58px] font-semibold whitespace-nowrap text-white">Get a personal consultation</h2>
          <a href="#start" className="mt-2.5 h-14 w-[196px] shrink-0 rounded-2xl bg-[#43b976]" aria-label="Get started" />
        </section>
      </div>
    </main>
  );
}

function Scrollbar() {
  return (
    <div className="flex w-3 shrink-0 flex-col items-center bg-[#f1eff3] text-[#55555a]">
      <Icon box="0 0 6 4" className="mt-1 h-1 w-1.5"><path d="M3 0l3 4H0z" /></Icon>
      <div className="flex-[712]" />
      <div className="w-full flex-[150] bg-[#c2c0c5]" />
      <div className="flex-[103]" />
      <Icon box="0 0 6 4" className="mb-1 h-1 w-1.5"><path d="M3 4l3-4H0z" /></Icon>
    </div>
  );
}

function Annotations() {
  return (
    <div className="pointer-events-none absolute inset-0 z-20 overflow-hidden">
      <div className="absolute top-[181px] left-[9px] h-[274px] w-[397px] rounded border-4 border-[#ff2415]" />
      <svg className="absolute top-[137px] left-[279px] h-[94px] w-[330px]" viewBox="279 137 330 94" aria-hidden="true">
        <path d="M280 224L292 213L293 219L420 185L607 137L421 191L295 225L296 229Z" fill="#ff2415" />
      </svg>
      <div className="absolute top-[219px] left-[193px] size-11 rounded-full border border-[#f2f1f4]" />
      <svg className="absolute top-[241px] left-[206px] h-[27px] w-[22px]" viewBox="622 213 66 81" aria-hidden="true">
        <path d="M640 255V220q0-4 4-4t5 4v17q6-5 9 1 6-4 9 2 5-3 8 3 5 0 5 7v18q-1 8-5 12v9h-27v-7l-17-25q-3-6 2-7 4 0 7 5z" fill="#ffffff" stroke="#33363c" strokeWidth="4" strokeLinejoin="round" />
        <path d="M649 236v13M658 238v12M667 241v10" stroke="#33363c" strokeWidth="4" />
      </svg>
    </div>
  );
}

export default function App() {
  return (
    <div className="relative flex h-screen flex-col overflow-hidden border-b border-[#2b2d31] bg-[#fefefe] font-['Open_Sans',sans-serif]">
      <TopBar />
      <div className="flex min-h-0 flex-1">
        <Panel />
        <Page />
        <Scrollbar />
      </div>
      <Annotations />
    </div>
  );
}
